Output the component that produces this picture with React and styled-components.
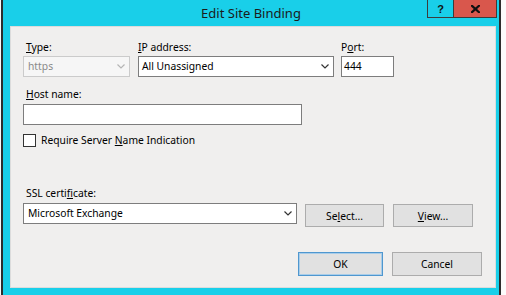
import React from "react";
import styled, { createGlobalStyle } from "styled-components";

const Global = createGlobalStyle`
  html, body { margin: 0; padding: 0; background: #fbfbfb; }
  body { font-family: "Noto Sans", "Open Sans", sans-serif; }
  * { box-sizing: border-box; }
`;

const Window = styled.div`
  margin-left: 1px;
  width: 500px;
  height: 295px;
  border-left: 2px solid #2d2d2d;
  border-right: 2px solid #2d2d2d;
  background: #19cfe9;
  display: flex;
  flex-direction: column;
`;

const TitleBar = styled.div`
  height: 26px;
  flex: none;
  display: grid;
  grid-template-columns: 1fr auto 1fr;
  align-items: start;
`;

const Title = styled.div`
  grid-column: 2;
  line-height: 26px;
  font-size: 13px;
  color: #1b1b1b;
  white-space: nowrap;
`;

const Captions = styled.div`
  grid-column: 3;
  justify-self: end;
  display: flex;
  margin-right: 2px;
`;

const CaptionButton = styled.div`
  width: ${(p) => p.$w}px;
  height: 18px;
  border: 1px solid #3c3c3c;
  border-top: none;
  border-left: ${(p) => (p.$joined ? "none" : "1px solid #3c3c3c")};
  background: ${(p) => p.$bg};
  display: flex;
  align-items: center;
  justify-content: center;
  font-weight: 700;
  font-size: 11px;
  color: #111;
  font-family: "Liberation Sans", sans-serif;
`;

const Client = styled.div`
  flex: 1;
  margin: 0 3px 7px 7px;
  background: #f0efee;
  border: 1px solid #dcdcdc;
  padding: 12px 13px 0 12px;
  display: flex;
  flex-direction: column;
  font-size: 10.3px;
  color: #000;
`;

const Row = styled.div`
  display: flex;
  align-items: flex-start;
  gap: ${(p) => p.$gap || 0}px;
  margin-top: ${(p) => p.$top || 0}px;
  justify-content: ${(p) => p.$justify || "flex-start"};
`;

const Field = styled.div`
  display: flex;
  flex-direction: column;
  width: ${(p) => p.$w}px;
  margin-top: ${(p) => p.$top || 0}px;
  margin-left: ${(p) => p.$ml || 0}px;
`;

const Label = styled.div`
  line-height: 16px;
  height: 16px;
  margin-bottom: ${(p) => p.$mb ?? 1}px;
  padding-left: ${(p) => p.$pl ?? 3}px;
  white-space: nowrap;
`;

const Key = styled.u`
  text-decoration: underline;
  text-underline-offset: 1px;
`;

const Box = styled.div`
  height: 21px;
  width: 100%;
  border: 1px solid ${(p) => (p.$disabled ? "#cbcbcb" : "#7d7d7d")};
  background: ${(p) => (p.$disabled ? "#f6f6f6" : "#ffffff")};
  color: ${(p) => (p.$disabled ? "#8a8a8a" : "#000")};
  display: flex;
  align-items: center;
  justify-content: space-between;
  padding: 0 4px 0 ${(p) => p.$pl ?? 3}px;
  line-height: 19px;
  white-space: nowrap;
`;

const CheckRow = styled.label`
  display: flex;
  align-items: center;
  gap: 5px;
  margin-top: 9px;
  height: 13px;
  line-height: 13px;
`;

const CheckBox = styled.span`
  width: 13px;
  height: 13px;
  border: 1px solid #333;
  background: #fff;
  flex: none;
`;

const Button = styled.div`
  width: ${(p) => p.$w}px;
  height: ${(p) => p.$h}px;
  margin-top: ${(p) => p.$top || 0}px;
  margin-left: ${(p) => p.$ml || 0}px;
  background: #e1e1e1;
  border: 1px solid ${(p) => (p.$default ? "#4f97cf" : "#acacac")};
  box-shadow: ${(p) => (p.$default ? "inset 0 0 0 1px #a9cde9" : "none")};
  display: flex;
  align-items: center;
  justify-content: center;
  white-space: nowrap;
`;

const Chevron = ({ color = "#333" }) => (
  <svg width="8" height="5" viewBox="0 0 8 5" style={{ flex: "none" }}>
    <polyline points="0.5,0.5 4,4 7.5,0.5" fill="none" stroke={color} strokeWidth="1.2" />
  </svg>
);

const CloseGlyph = () => (
  <svg width="9" height="8" viewBox="0 0 9 8">
    <path d="M1 0.8 L8 7.2 M8 0.8 L1 7.2" stroke="#111" strokeWidth="2.2" strokeLinecap="square" />
  </svg>
);

export default function App() {
  return (
    <>
      <Global />
      <Window>
        <TitleBar>
          <Title>Edit Site Binding</Title>
          <Captions>
            <CaptionButton $w={27} $bg="#19cfe9">?</CaptionButton>
            <CaptionButton $w={43} $bg="#d9574c" $joined>
              <CloseGlyph />
            </CaptionButton>
          </Captions>
        </TitleBar>
        <Client>
          <Row>
            <Field $w={107}>
              <Label><Key>T</Key>ype:</Label>
              <Box $disabled $pl={4}>
                <span>https</span>
                <Chevron color="#b5b5b5" />
              </Box>
            </Field>
            <Field $w={196} $ml={8}>
              <Label $pl={0}><Key>I</Key>P address:</Label>
              <Box>
                <span>All Unassigned</span>
                <Chevron />
              </Box>
            </Field>
            <Field $w={53} $ml={7}>
              <Label $pl={0}>P<Key>o</Key>rt:</Label>
              <Box $pl={2}>444</Box>
            </Field>
          </Row>
          <Field $w={279} $top={9}>
            <Label $mb={2}><Key>H</Key>ost name:</Label>
            <Box />
          </Field>
          <CheckRow>
            <CheckBox />
            <span>Require Server <Key>N</Key>ame Indication</span>
          </CheckRow>
          <Field $w={474} $top={38}>
            <Label $mb={2}>SSL certi<Key>f</Key>icate:</Label>
            <Row>
              <Field $w={274}>
                <Box $pl={4}>
                  <span>Microsoft Exchange</span>
                  <Chevron />
                </Box>
              </Field>
              <Button $w={79} $h={23} $top={1} $ml={8}>Se<Key>l</Key>ect...</Button>
              <Button $w={80} $h={23} $top={1} $ml={9}><Key>V</Key>iew...</Button>
            </Row>
          </Field>
          <Row $top={25} $gap={9} $justify="flex-end">
            <Button $w={85} $h={24} $default>OK</Button>
            <Button $w={90} $h={24}>Cancel</Button>
          </Row>
        </Client>
      </Window>
    </>
  );
}
